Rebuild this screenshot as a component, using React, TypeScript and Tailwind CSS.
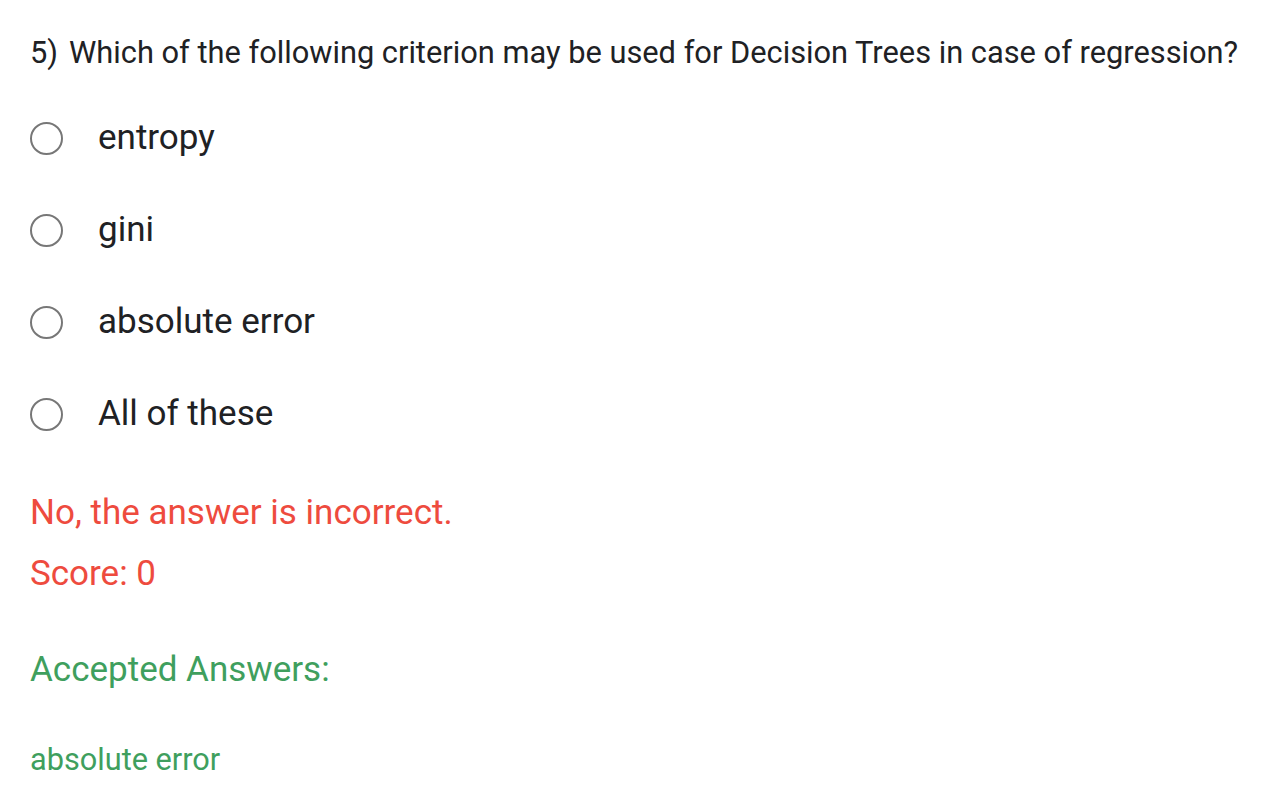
export default function App() {
  const options = ["entropy", "gini", "absolute error", "All of these"];
  return (
    <div className="w-[1276px] h-[812px] bg-white pl-[30px] pt-[34px]" style={{ fontFamily: "Roboto, 'Liberation Sans', sans-serif" }}>
      <div className="text-[30.8px] leading-[38px] text-[#202124] whitespace-nowrap">
        5)<span className="ml-[11px]">Which of the following criterion may be used for Decision Trees in case of regression?</span>
      </div>
      <div className="mt-[47px] flex flex-col gap-[54px]">
        {options.map((o) => (
          <div key={o} className="flex items-center h-[38px]">
            <div className="w-[33px] h-[33px] rounded-full border-[2.5px] border-[#777777] shrink-0" />
            <span className="ml-[35px] text-[35px] leading-[38px] text-[#202124]">{o}</span>
          </div>
        ))}
      </div>
      <div className="mt-[60px] text-[35px] leading-[40px] text-[#ee4b3e]">No, the answer is incorrect.</div>
      <div className="mt-[21px] text-[35px] leading-[40px] text-[#ee4b3e]">Score: 0</div>
      <div className="mt-[56px] text-[35px] leading-[40px] text-[#3f9f5e]">Accepted Answers:</div>
      <div className="mt-[52px] text-[30.7px] leading-[36px] text-[#3f9f5e]">absolute error</div>
    </div>
  );
}
